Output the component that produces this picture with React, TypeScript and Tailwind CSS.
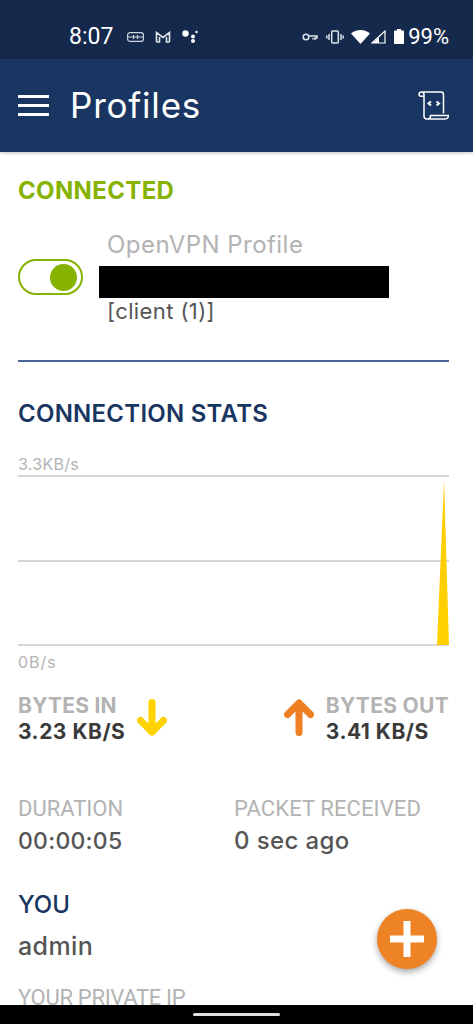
const font = { fontFamily: "Inter, 'Open Sans', sans-serif" };

function StatusIcons() {
  return (
    <div className="flex items-center text-white">
      <svg width="16" height="10" viewBox="0 0 16 10" fill="none" stroke="#dfe4ec" strokeWidth="1.5" className="mr-[8px]">
        <circle cx="4" cy="5" r="2.8" />
        <path d="M7 4h8v2h-2v2M11 6v1.5" />
      </svg>
      <svg width="18" height="14" viewBox="0 0 18 14" fill="none" stroke="#dfe4ec" strokeWidth="1.5" className="mr-[7px]">
        <rect x="5.7" y="1" width="6.6" height="12" rx="1" />
        <path d="M3 4v6M15 4v6M.8 5.5v3M17.2 5.5v3" />
      </svg>
      <svg width="19" height="14" viewBox="0 0 19 14" fill="#fff" className="mr-[1px]">
        <path d="M0 3.5C2.500 1.200 5.800 0 9.500 0s7 1.200 9.500 3.500L9.500 14z" />
      </svg>
      <svg width="15" height="14" viewBox="0 0 15 14" fill="none" className="mr-[8px]">
        <path d="M14 1v12H1z" stroke="#fff" strokeWidth="1.2" />
        <path d="M8 7.5V13H2z" fill="#fff" />
      </svg>
      <svg width="10" height="15" viewBox="0 0 10 15" fill="#fff" className="mr-[4px]">
        <path d="M3 0h4v1.500h2.200a.8.8 0 0 1 .8.8V14.200a.8.8 0 0 1-.8.8H.8a.8.8 0 0 1-.8-.8V2.300a.8.8 0 0 1 .8-.8H3z" />
      </svg>
      <span className="text-[22px] leading-none font-['Roboto']">99%</span>
    </div>
  );
}

function StatusBar() {
  return (
    <div className="h-[59px] bg-[#14294b] flex items-center justify-between pl-[69px] pr-[24px] pt-[14px] shrink-0">
      <div className="flex items-center text-white">
        <span className="text-[23px] leading-none mr-[14px] font-['Roboto']">8:07</span>
        <svg width="17" height="10" viewBox="0 0 17 10" fill="none" stroke="#cfd6e2" strokeWidth="1.2" className="mr-[11px]">
          <rect x=".6" y=".6" width="15.8" height="8.8" rx="2.5" />
          <path d="M1 5h15M6.500 3v4M10.500 3v4" />
        </svg>
        <svg width="16" height="12" viewBox="0 0 16 12" fill="none" stroke="#dfe4ec" strokeWidth="1.6" className="mr-[11px]">
          <path d="M1.500 11V1.500L8 6.500l6.500-5V11M1.500 11h3V6M14.500 11h-3V6" />
        </svg>
        <svg width="16" height="13" viewBox="0 0 16 13" fill="#fff">
          <circle cx="3.5" cy="3.5" r="3.2" />
          <circle cx="11" cy="6.5" r="2" />
          <circle cx="11" cy="11" r="2" />
          <circle cx="14.5" cy="2" r="1.2" />
        </svg>
      </div>
      <StatusIcons />
    </div>
  );
}

function AppBar() {
  return (
    <div className="h-[93px] bg-[#183661] flex items-center justify-between pl-[18px] pr-[24px] shrink-0 shadow-[0_1px_3px_rgba(0,0,0,0.25)] relative">
      <div className="flex items-center">
        <div className="w-[31px] flex flex-col gap-[6px] mr-[21px]">
          <div className="h-[3px] bg-white" />
          <div className="h-[3px] bg-white" />
          <div className="h-[3px] bg-white" />
        </div>
        <h1 className="text-[35px] leading-none text-white tracking-[0.8px]">Profiles</h1>
      </div>
      <svg width="31" height="29" viewBox="0 0 31 29" fill="none" stroke="#fff" strokeWidth="1.5">
        <path d="M1 3.500C1 1.800 2 1 3.500 1H23c1.700 0 2.500 1 2.500 2.500V22.500M3.500 1C5 1 6 2 6 3.500V25c0 1.600 1 3 3 3h18c2 0 3.500-1 3.500-3.500H12.500V25c0 1.800-1 3-3 3M1 3.500c0 1 .8 1.700 2 1.700h3" />
        <path d="M13 10.500l-2.500 2 2.500 2M18.500 10.500l2.500 2-2.500 2" strokeWidth="2" />
      </svg>
    </div>
  );
}

function Toggle() {
  return (
    <div className="w-[65px] h-[36px] rounded-full border-[2px] border-[#86b200] flex items-center justify-end pr-[4px] bg-white shrink-0">
      <div className="w-[27px] h-[27px] rounded-full bg-[#86b200]" />
    </div>
  );
}

function Chart() {
  return (
    <svg width="431" height="172" viewBox="0 0 431 172" className="block">
      <path d="M0 1H431M0 86H431M0 170H431" stroke="#c9c9c9" strokeWidth="1.5" fill="none" />
      <path d="M419 170L426 5L431 170z" fill="#ffcf00" />
    </svg>
  );
}

function Arrow({ color, up }: { color: string; up?: boolean }) {
  return (
    <svg width="30" height="37" viewBox="0 0 30 37" fill="none" stroke={color} strokeWidth="7" strokeLinecap="round" strokeLinejoin="round" className={up ? "" : "rotate-180"}>
      <path d="M15 33.500V4M3.500 15.500L15 4l11.500 11.500" />
    </svg>
  );
}

export default function App() {
  return (
    <div className="h-screen w-full flex flex-col overflow-hidden bg-white relative" style={font}>
      <StatusBar />
      <AppBar />
      <main className="flex-1 overflow-hidden pl-[18px] pr-[24px] pt-[24px]">
        <h2 className="text-[24px] leading-[30px] font-bold text-[#86b200] tracking-[0.35px]">CONNECTED</h2>
        <div className="flex items-center mt-[23px] h-[96px]">
          <Toggle />
          <div className="ml-[16px]">
            <p className="text-[24px] leading-[30px] text-[#b3b3b3] pl-[8px] tracking-[0.45px]">OpenVPN Profile</p>
            <div className="w-[290px] h-[32px] bg-black mt-[6px]" />
            <p className="text-[22px] leading-[26px] text-[#555555] pl-[8px] tracking-[0.4px]">[client (1)]</p>
          </div>
        </div>
        <div className="h-[2px] bg-[#4a6696] mt-[35px]" />
        <h2 className="text-[24px] leading-[30px] font-semibold text-[#183661] mt-[37px] tracking-[0.25px]">CONNECTION STATS</h2>
        <p className="text-[16px] leading-[20px] text-[#b3b3b3] mt-[25px] mb-[1px] tracking-[0.3px]">3.3KB/s</p>
        <Chart />
        <p className="text-[16px] leading-[20px] text-[#b3b3b3] mt-[5px] tracking-[1px]">0B/s</p>
        <div className="flex justify-between mt-[21px]">
          <div className="flex items-center">
            <div>
              <p className="text-[21px] leading-[26px] font-bold text-[#b3b3b3] tracking-[0.25px]">BYTES IN</p>
              <p className="text-[21px] leading-[26px] font-bold text-[#3a3a3a] tracking-[0.5px]">3.23 KB/S</p>
            </div>
            <div className="ml-[12px] mb-[4px]"><Arrow color="#ffd200" /></div>
          </div>
          <div className="flex items-center">
            <div className="mr-[12px] mb-[4px]"><Arrow color="#ee7f23" up /></div>
            <div>
              <p className="text-[21px] leading-[26px] font-bold text-[#b3b3b3] tracking-[0.3px]">BYTES OUT</p>
              <p className="text-[21px] leading-[26px] font-bold text-[#3a3a3a] tracking-[0.5px]">3.41 KB/S</p>
            </div>
          </div>
        </div>
        <div className="grid grid-cols-[216px_1fr] mt-[50px]">
          <div>
            <p className="text-[22px] leading-[28px] text-[#b3b3b3] font-['Roboto']">DURATION</p>
            <p className="text-[23px] leading-[30px] text-[#555555] mt-[3px] font-medium tracking-[0.25px]">00:00:05</p>
          </div>
          <div>
            <p className="text-[22px] leading-[28px] text-[#b3b3b3] font-['Roboto'] tracking-[0.1px]">PACKET RECEIVED</p>
            <p className="text-[24px] leading-[30px] text-[#555555] mt-[3px] font-medium tracking-[0.4px]">0 sec ago</p>
          </div>
        </div>
        <h2 className="text-[24px] leading-[30px] font-medium text-[#183661] mt-[34px]">YOU</h2>
        <p className="text-[25px] leading-[30px] text-[#555555] mt-[11px] font-medium tracking-[0.4px]">admin</p>
        <p className="text-[22px] leading-[28px] text-[#b3b3b3] mt-[23px] font-['Roboto'] tracking-[-0.3px]">YOUR PRIVATE IP</p>
      </main>
      <div className="h-[19px] bg-black flex items-center justify-center shrink-0">
        <div className="w-[87px] h-[3px] rounded-full bg-[#e0e0e0]" />
      </div>
      <button className="absolute left-[377px] top-[909px] w-[60px] h-[60px] rounded-full bg-[#ee8326] shadow-[0_3px_6px_rgba(0,0,0,0.35)] flex items-center justify-center">
        <svg width="34" height="36" viewBox="0 0 34 36" fill="#fff">
          <path d="M13.500 0h7v14.500H34v7H20.500V36h-7V21.500H0v-7h13.500z" />
        </svg>
      </button>
    </div>
  );
}
